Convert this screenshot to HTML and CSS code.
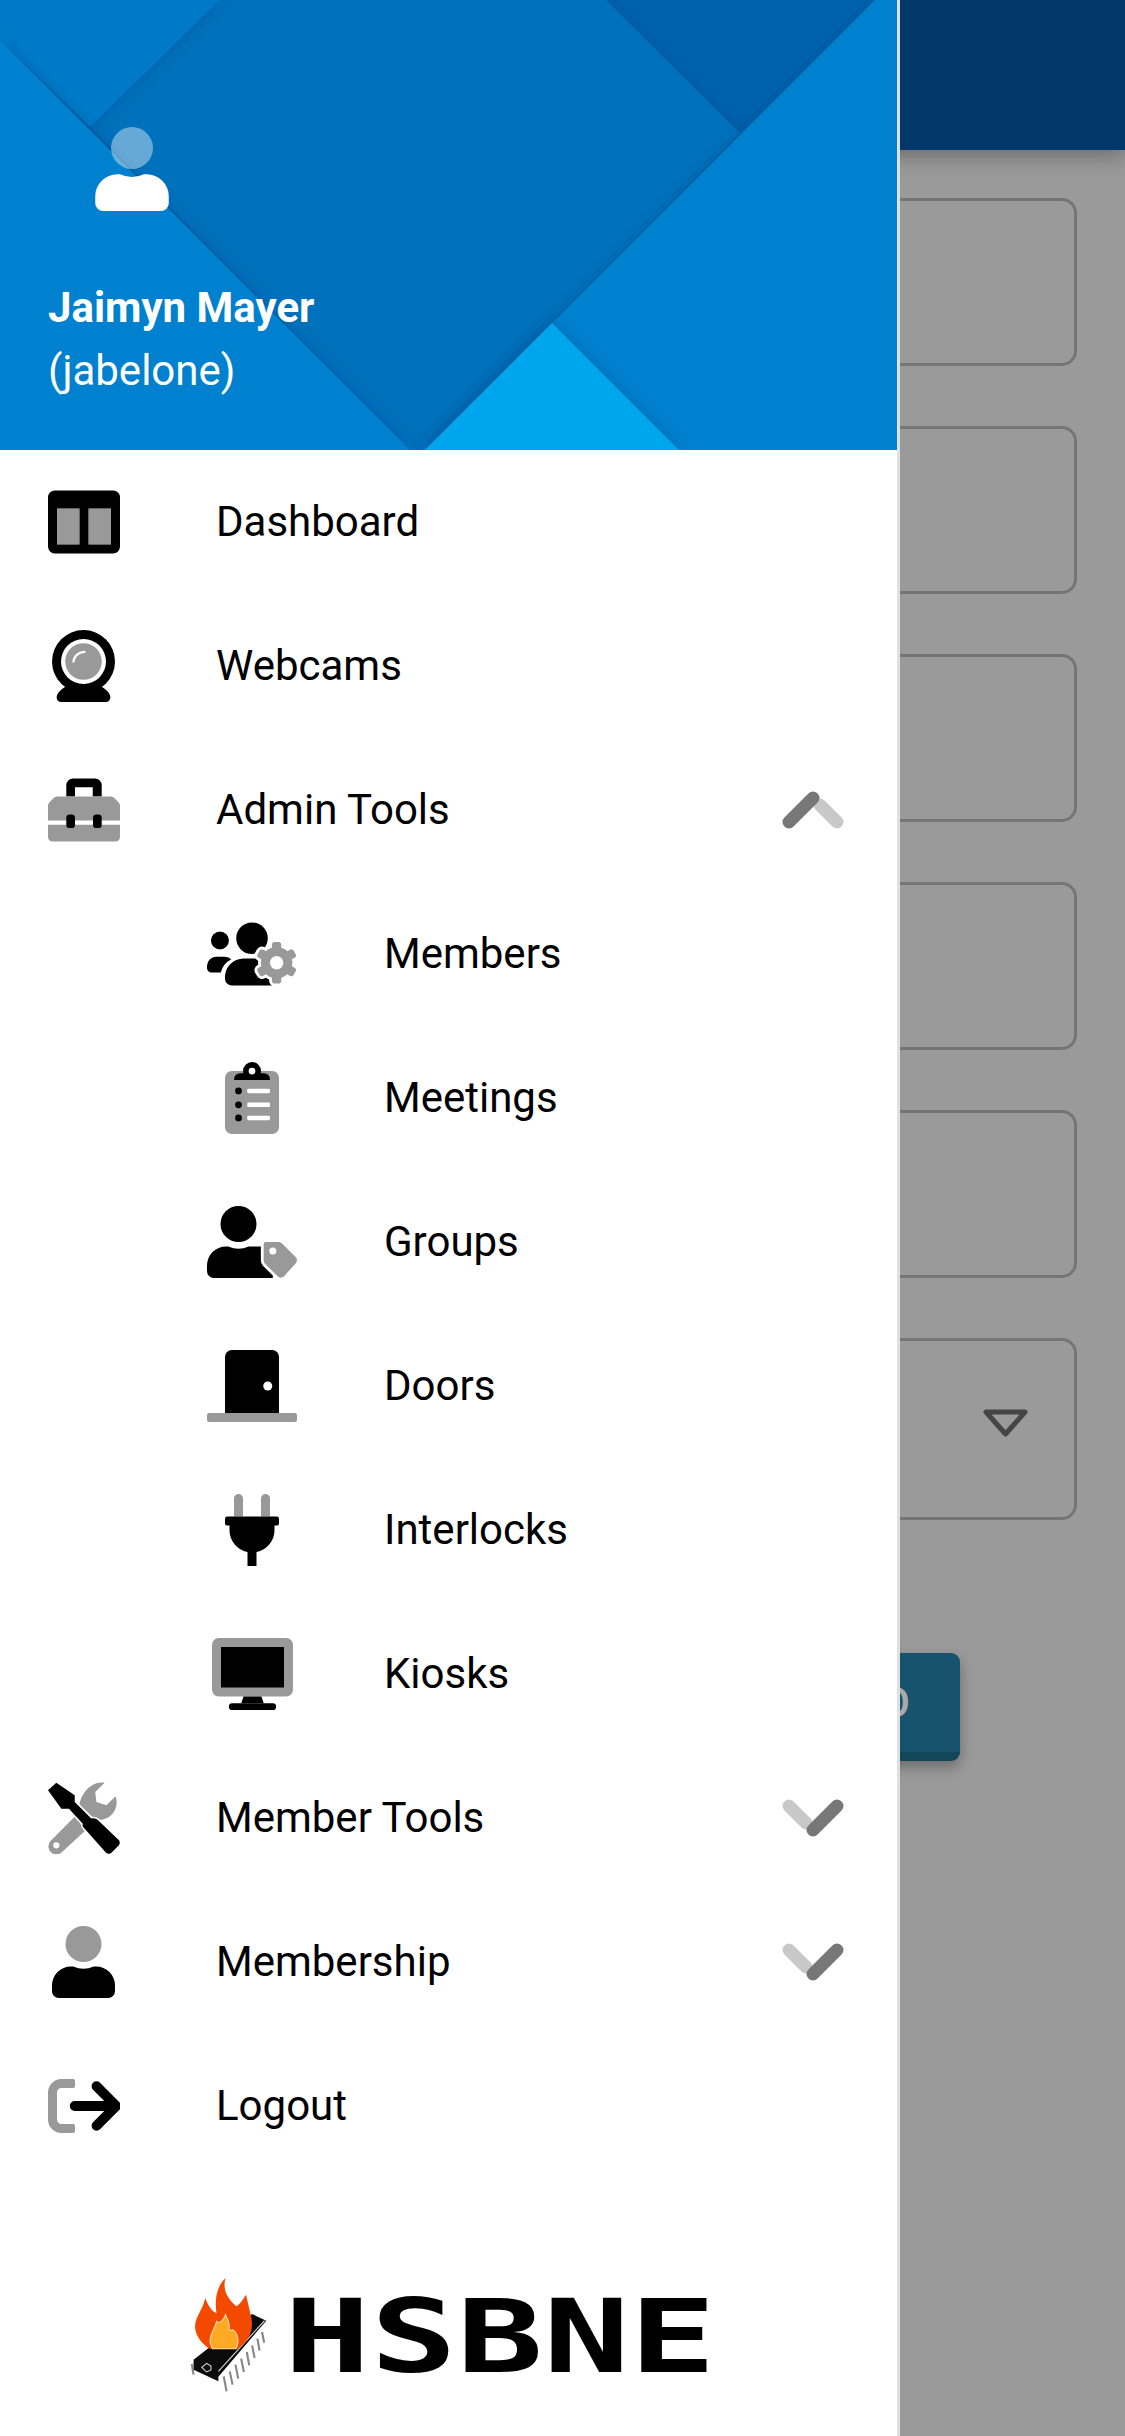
FILE: index.html
```html
<!DOCTYPE html>
<html lang="en">

<head>
    <meta charset="UTF-8">
    <meta name="viewport" content="width=device-width, initial-scale=1.0">
    <title>HSBNE Member Portal</title>
    <link rel="stylesheet" href="styles.css">
</head>

<body>
    <div class="page">
        <div class="topbar"></div>
        <div class="form">
            <div class="field"></div>
            <div class="field"></div>
            <div class="field"></div>
            <div class="field"></div>
            <div class="field"></div>
            <div class="field select">
                <svg width="45" height="28" viewBox="0 0 45 28">
                    <path d="M3 3H42L22.500 25z" class="select-arrow" />
                </svg>
            </div>
            <button class="btn">GO</button>
        </div>
    </div>

    <nav class="drawer">
        <header class="drawer-header">
            <svg class="header-art" width="897" height="450" viewBox="0 0 897 450">
                <defs>
                    <filter id="soft" x="-15%" y="-15%" width="130%" height="130%">
                        <feDropShadow dx="0" dy="0" stdDeviation="8" flood-color="#00407f" flood-opacity="0.38" />
                    </filter>
                </defs>
                <rect width="897" height="450" fill="#0062ad" />
                <polygon points="220,0 606,0 740,133 425,450 410,450 90,127" fill="#0071bc" filter="url(#soft)" />
                <polygon points="0,0 220,0 90,127 0,40" fill="#007ac8" filter="url(#soft)" />
                <polygon points="0,40 410,450 0,450" fill="#0081cf" filter="url(#soft)" />
                <polygon points="875,0 897,0 897,450 425,450" fill="#0081cf" filter="url(#soft)" />
                <polygon points="552,323 425,450 679,450" fill="#00a6ec" filter="url(#soft)" />
            </svg>
            <svg class="header-user" width="74" height="84" viewBox="0 0 448 512">
                <path fill="#fff" opacity="0.4" d="M352 128A128 128 0 1 1 224 0a128 128 0 0 1 128 128z" />
                <path fill="#fff" d="M313.600 288h-16.700a174.100 174.100 0 0 1-145.800 0h-16.700A134.400 134.400 0 0 0 0 422.400V464a48 48 0 0 0 48 48h352a48 48 0 0 0 48-48v-41.600A134.400 134.400 0 0 0 313.600 288z" />
            </svg>
            <div class="user-name">Jaimyn Mayer</div>
            <div class="user-login">(jabelone)</div>
        </header>

        <ul class="menu">
            <li class="item">
                <span class="slot">
                    <svg width="72" height="72" viewBox="0 0 512 512">
                        <path class="dim" d="M64 160h160v256H64zM288 160h160v256H288z" />
                        <path d="M464 32H48A48 48 0 0 0 0 80v352a48 48 0 0 0 48 48h416a48 48 0 0 0 48-48V80a48 48 0 0 0-48-48zM224 416H64V160h160zm224 0H288V160h160z" />
                    </svg>
                </span>
                <span class="label">Dashboard</span>
            </li>
            <li class="item">
                <span class="slot">
                    <svg class="narrow" width="63" height="72" viewBox="0 0 448 512">
                        <path d="M100 400Q33 440 33 480a32 32 0 0 0 32 32h318a32 32 0 0 0 32-32q0-40-67-80z" />
                        <circle cx="224" cy="224" r="224" />
                        <circle cx="224" cy="224" r="160" fill="#fff" />
                        <circle cx="224" cy="224" r="130" fill="#999" />
                        <path d="M152 225a80 80 0 0 1 80-70" fill="none" stroke="#fff" stroke-width="16" stroke-linecap="round" />
                    </svg>
                </span>
                <span class="label">Webcams</span>
            </li>
            <li class="item">
                <span class="slot">
                    <svg width="72" height="72" viewBox="0 0 512 512">
                        <path d="M130 160V80a48 48 0 0 1 48-48h156a48 48 0 0 1 48 48v80h-64V94H192v66z" />
                        <path class="dim" d="M0 360h512v88a32 32 0 0 1-32 32H32a32 32 0 0 1-32-32zM0 330V224a32 32 0 0 1 9-22l32-32a32 32 0 0 1 22-10h386a32 32 0 0 1 22 10l32 32a32 32 0 0 1 9 22v106z" />
                        <rect x="130" y="288" width="62" height="96" rx="24" />
                        <rect x="320" y="288" width="62" height="96" rx="24" />
                    </svg>
                </span>
                <span class="label">Admin Tools</span>
                <svg class="chevron" width="62" height="38" viewBox="0 0 62 38">
                    <path d="M38 14L55 31" class="chev-light" />
                    <path d="M7 31L31 7" class="chev-dark" />
                </svg>
            </li>

            <li class="item sub">
                <span class="slot">
                    <svg width="90" height="72" viewBox="0 0 640 512">
                        <defs>
                            <g id="gear">
                                <circle cx="495" cy="318" r="112" />
                                <rect x="462" y="170" width="66" height="296" rx="20" />
                                <rect x="462" y="170" width="66" height="296" rx="20" transform="rotate(60 495 318)" />
                                <rect x="462" y="170" width="66" height="296" rx="20" transform="rotate(120 495 318)" />
                            </g>
                        </defs>
                        <circle cx="92" cy="160" r="64" />
                        <path d="M0 340a64 64 0 0 1 64-64h64a64 64 0 0 1 45 18 146 146 0 0 0-75 94H32a32 32 0 0 1-32-32z" />
                        <circle cx="320" cy="144" r="112" />
                        <path d="M128 434a134 134 0 0 1 134-146h120l90 192H176a48 48 0 0 1-48-46z" />
                        <use href="#gear" fill="#fff" stroke="#fff" stroke-width="40" />
                        <use href="#gear" fill="#999" />
                        <circle cx="495" cy="318" r="48" fill="#fff" />
                    </svg>
                </span>
                <span class="label">Members</span>
            </li>
            <li class="item sub">
                <span class="slot">
                    <svg width="54" height="72" viewBox="0 0 384 512">
                        <path class="dim" d="M336 64H48a48 48 0 0 0-48 48v352a48 48 0 0 0 48 48h288a48 48 0 0 0 48-48V112a48 48 0 0 0-48-48z" />
                        <circle cx="192" cy="64" r="64" />
                        <path d="M64 128q0-48 48-48h160q48 0 48 48z" />
                        <circle cx="192" cy="64" r="24" fill="#fff" />
                        <circle cx="96" cy="206" r="24" />
                        <circle cx="96" cy="304" r="24" />
                        <circle cx="96" cy="398" r="24" />
                        <rect x="158" y="190" width="162" height="32" rx="8" fill="#fff" />
                        <rect x="158" y="288" width="162" height="32" rx="8" fill="#fff" />
                        <rect x="158" y="382" width="162" height="32" rx="8" fill="#fff" />
                    </svg>
                </span>
                <span class="label">Meetings</span>
            </li>
            <li class="item sub">
                <span class="slot">
                    <svg width="90" height="72" viewBox="0 0 640 512">
                        <circle cx="224" cy="128" r="128" />
                        <path d="M313.600 288h-16.700a174.100 174.100 0 0 1-145.800 0h-16.700A134.400 134.400 0 0 0 0 422.400V464a48 48 0 0 0 48 48h420V288z" />
                        <path class="tag-halo" d="M420 256h92a32 32 0 0 1 22 10l96 96a32 32 0 0 1 0 46l-82 92a32 32 0 0 1-46 0l-90-90a32 32 0 0 1-9-23V272a16 16 0 0 1 17-16z" />
                        <path fill="#999" d="M420 256h92a32 32 0 0 1 22 10l96 96a32 32 0 0 1 0 46l-82 92a32 32 0 0 1-46 0l-90-90a32 32 0 0 1-9-23V272a16 16 0 0 1 17-16z" />
                        <circle cx="468" cy="320" r="25" fill="#fff" />
                    </svg>
                </span>
                <span class="label">Groups</span>
            </li>
            <li class="item sub">
                <span class="slot">
                    <svg width="90" height="72" viewBox="0 0 640 512">
                        <path d="M128 48a48 48 0 0 1 48-48h288a48 48 0 0 1 48 48v400H128z" />
                        <path class="dim" d="M624 448H16a16 16 0 0 0-16 16v32a16 16 0 0 0 16 16h608a16 16 0 0 0 16-16v-32a16 16 0 0 0-16-16z" />
                        <circle cx="432" cy="256" r="32" fill="#fff" />
                    </svg>
                </span>
                <span class="label">Doors</span>
            </li>
            <li class="item sub">
                <span class="slot">
                    <svg width="54" height="72" viewBox="0 0 384 512">
                        <path class="dim" d="M64 160V32a32 32 0 0 1 64 0v128zM256 160V32a32 32 0 0 1 64 0v128z" />
                        <rect x="0" y="160" width="384" height="64" rx="16" />
                        <path d="M32 216h320v40a160 160 0 0 1-128 157v99h-64v-99A160 160 0 0 1 32 256z" />
                    </svg>
                </span>
                <span class="label">Interlocks</span>
            </li>
            <li class="item sub">
                <span class="slot">
                    <svg width="81" height="72" viewBox="0 0 576 512">
                        <path class="dim" d="M528 0H48A48 48 0 0 0 0 48v320a48 48 0 0 0 48 48h480a48 48 0 0 0 48-48V48a48 48 0 0 0-48-48z" />
                        <path d="M64 64h448v288H64zM224 416h128l16 48H208z" />
                        <rect x="120" y="464" width="336" height="48" rx="24" />
                    </svg>
                </span>
                <span class="label">Kiosks</span>
            </li>

            <li class="item">
                <span class="slot">
                    <svg width="72" height="72" viewBox="0 0 512 512">
                        <path class="dim" d="M403 5L336 71l8 71 71 24 66-64c29 88-31 173-136 170L100 497a56 56 0 0 1-82-77L225 212C205 110 300-15 403 5z" />
                        <circle cx="59" cy="450" r="22" fill="#fff" />
                        <path class="driver" d="M0 59L59 5l131 90v47l118 118c18-4 36 0 50 14l139 133a30 30 0 0 1 8 8 30 30 0 0 1-8 42l-44 45a30 30 0 0 1-26 8 30 30 0 0 1-16-8L261 332c-14-14-18-20-14-36L149 190H95z" />
                    </svg>
                </span>
                <span class="label">Member Tools</span>
                <svg class="chevron down" width="62" height="38" viewBox="0 0 62 38">
                    <path d="M38 14L55 31" class="chev-light" />
                    <path d="M7 31L31 7" class="chev-dark" />
                </svg>
            </li>
            <li class="item">
                <span class="slot">
                    <svg class="narrow" width="63" height="72" viewBox="0 0 448 512">
                        <path class="dim" d="M352 128A128 128 0 1 1 224 0a128 128 0 0 1 128 128z" />
                        <path d="M313.600 288h-16.700a174.100 174.100 0 0 1-145.800 0h-16.700A134.400 134.400 0 0 0 0 422.400V464a48 48 0 0 0 48 48h352a48 48 0 0 0 48-48v-41.600A134.400 134.400 0 0 0 313.600 288z" />
                    </svg>
                </span>
                <span class="label">Membership</span>
                <svg class="chevron down" width="62" height="38" viewBox="0 0 62 38">
                    <path d="M38 14L55 31" class="chev-light" />
                    <path d="M7 31L31 7" class="chev-dark" />
                </svg>
            </li>
            <li class="item">
                <span class="slot">
                    <svg width="72" height="72" viewBox="0 0 512 512">
                        <path class="dim" d="M180 448H96a96 96 0 0 1-96-96V160a96 96 0 0 1 96-96h84a12 12 0 0 1 12 12v40a12 12 0 0 1-12 12H96a32 32 0 0 0-32 32v192a32 32 0 0 0 32 32h84a12 12 0 0 1 12 12v40a12 12 0 0 1-12 12z" />
                        <path class="arrow" d="M190 256H470M345 115L485 256L345 397" />
                    </svg>
                </span>
                <span class="label">Logout</span>
            </li>
        </ul>

        <div class="logo">
            <svg width="77" height="115" viewBox="55 50 217 345" preserveAspectRatio="none">
                <path class="pins" d="M60 308l5 32M150 345l8 45M167 330l8 40M183 310l8 42M199 292l8 40M215 272l7 40M230 252l7 38M245 232l6 36M258 212l6 32" />
                <path fill="#0b0b0b" d="M65 295L230 158l40 20-135 168v14l-70-35z" />
                <path fill="none" stroke="#ddd" stroke-width="3" d="M135 330L265 178M88 318l14-12 12 8v12l-12 6z" />
                <path fill="#f44a00" d="M155 50C125 80 125 130 130 155 115 150 105 130 98 110 90 150 65 170 70 205 75 235 100 255 110 262H190C220 240 235 210 228 170 222 140 215 110 213 100 200 120 195 130 185 135 165 115 145 90 155 50z" />
                <path fill="#ffa924" stroke="#ffe0b0" stroke-width="3" d="M155 160C150 175 140 190 130 180 125 205 108 220 112 245L118 262H185C195 240 190 215 175 205 172 205 168 210 165 205 168 190 160 170 155 160z" />
            </svg>
            <svg class="logo-word" width="436" height="80" viewBox="0 0 436 80">
                <text x="0" y="77" textLength="432" lengthAdjust="spacingAndGlyphs">HSBNE</text>
            </svg>
        </div>
    </nav>
</body>

</html>
```

FILE: styles.css
```css
* {
    box-sizing: border-box;
}

body {
    margin: 0;
    font-family: Roboto, Arial, sans-serif;
    background-color: #9a9a9a;
}

.page {
    width: 1125px;
    height: 2436px;
    overflow: hidden;
    background-color: #9a9a9a;
}

.topbar {
    height: 150px;
    background-color: #03386a;
    box-shadow: 0 6px 20px rgba(0, 0, 0, 0.3);
}

.form {
    display: flex;
    flex-direction: column;
    gap: 60px;
    padding: 48px;
}

.field {
    height: 168px;
    border: 3px solid #757575;
    border-radius: 15px;
}

.select {
    height: 182px;
    display: flex;
    justify-content: flex-end;
    align-items: center;
    padding-right: 46px;
}

.select svg {
    margin-top: -12px;
}

.select-arrow {
    fill: none;
    stroke: #454545;
    stroke-width: 5;
    stroke-linejoin: round;
}

.btn {
    align-self: center;
    width: 795px;
    height: 108px;
    margin-top: 73px;
    padding: 0 50px 0 0;
    border: none;
    border-bottom: 9px solid #124659;
    border-radius: 9px;
    background-color: #18536e;
    color: #aaa;
    font-family: Roboto, Arial, sans-serif;
    font-size: 42px;
    font-weight: 500;
    text-align: right;
    box-shadow: 0 6px 14px rgba(0, 0, 0, 0.3);
}

.drawer {
    position: absolute;
    top: 0;
    left: 0;
    width: 900px;
    height: 2436px;
    display: flex;
    flex-direction: column;
    background-color: #fff;
    border-right: 3px solid #e0e0e0;
}

.drawer-header {
    position: relative;
    height: 450px;
    padding: 127px 0 0 48px;
    color: #fff;
    font-size: 42px;
    line-height: 62px;
}

.header-art {
    position: absolute;
    top: 0;
    left: 0;
}

.header-user {
    position: relative;
    display: block;
    margin: 0 0 66px 47px;
}

.user-name {
    position: relative;
    font-weight: 700;
}

.user-login {
    position: relative;
    margin-top: 1px;
}

.menu {
    list-style: none;
    margin: 0;
    padding: 0;
}

.item {
    display: flex;
    align-items: center;
    height: 144px;
    padding-left: 48px;
    font-size: 42px;
    color: #000;
}

.label {
    margin-bottom: 2px;
}

.slot {
    display: flex;
    justify-content: center;
    width: 72px;
    margin-right: 96px;
}

.sub {
    padding-left: 207px;
}

.sub .slot {
    width: 90px;
    margin-right: 87px;
}

.slot svg {
    display: block;
}

.slot .narrow {
    margin-right: 1px;
}

.dim {
    fill: #999;
}

.tag-halo {
    fill: #fff;
    stroke: #fff;
    stroke-width: 40;
}

.driver {
    stroke: #fff;
    stroke-width: 24;
    paint-order: stroke;
}

.arrow {
    fill: none;
    stroke: #000;
    stroke-width: 70;
    stroke-linecap: round;
    stroke-linejoin: round;
}

.chevron {
    margin-left: auto;
    margin-right: 53px;
}

.chevron.down {
    transform: rotate(180deg);
}

.chev-dark,
.chev-light {
    fill: none;
    stroke-width: 13;
    stroke-linecap: round;
}

.chev-dark {
    stroke: #777;
}

.chev-light {
    stroke: #c8c8c8;
}

.logo {
    display: flex;
    justify-content: center;
    align-items: center;
    gap: 17px;
    flex: 1;
    padding-top: 56px;
    padding-left: 13px;
}

.pins {
    fill: none;
    stroke: #888;
    stroke-width: 6;
}

.logo-word {
    overflow: visible;
}

.logo-word text {
    font-family: "DejaVu Sans Mono", monospace;
    font-size: 101px;
    font-weight: 700;
    fill: #000;
}
```
